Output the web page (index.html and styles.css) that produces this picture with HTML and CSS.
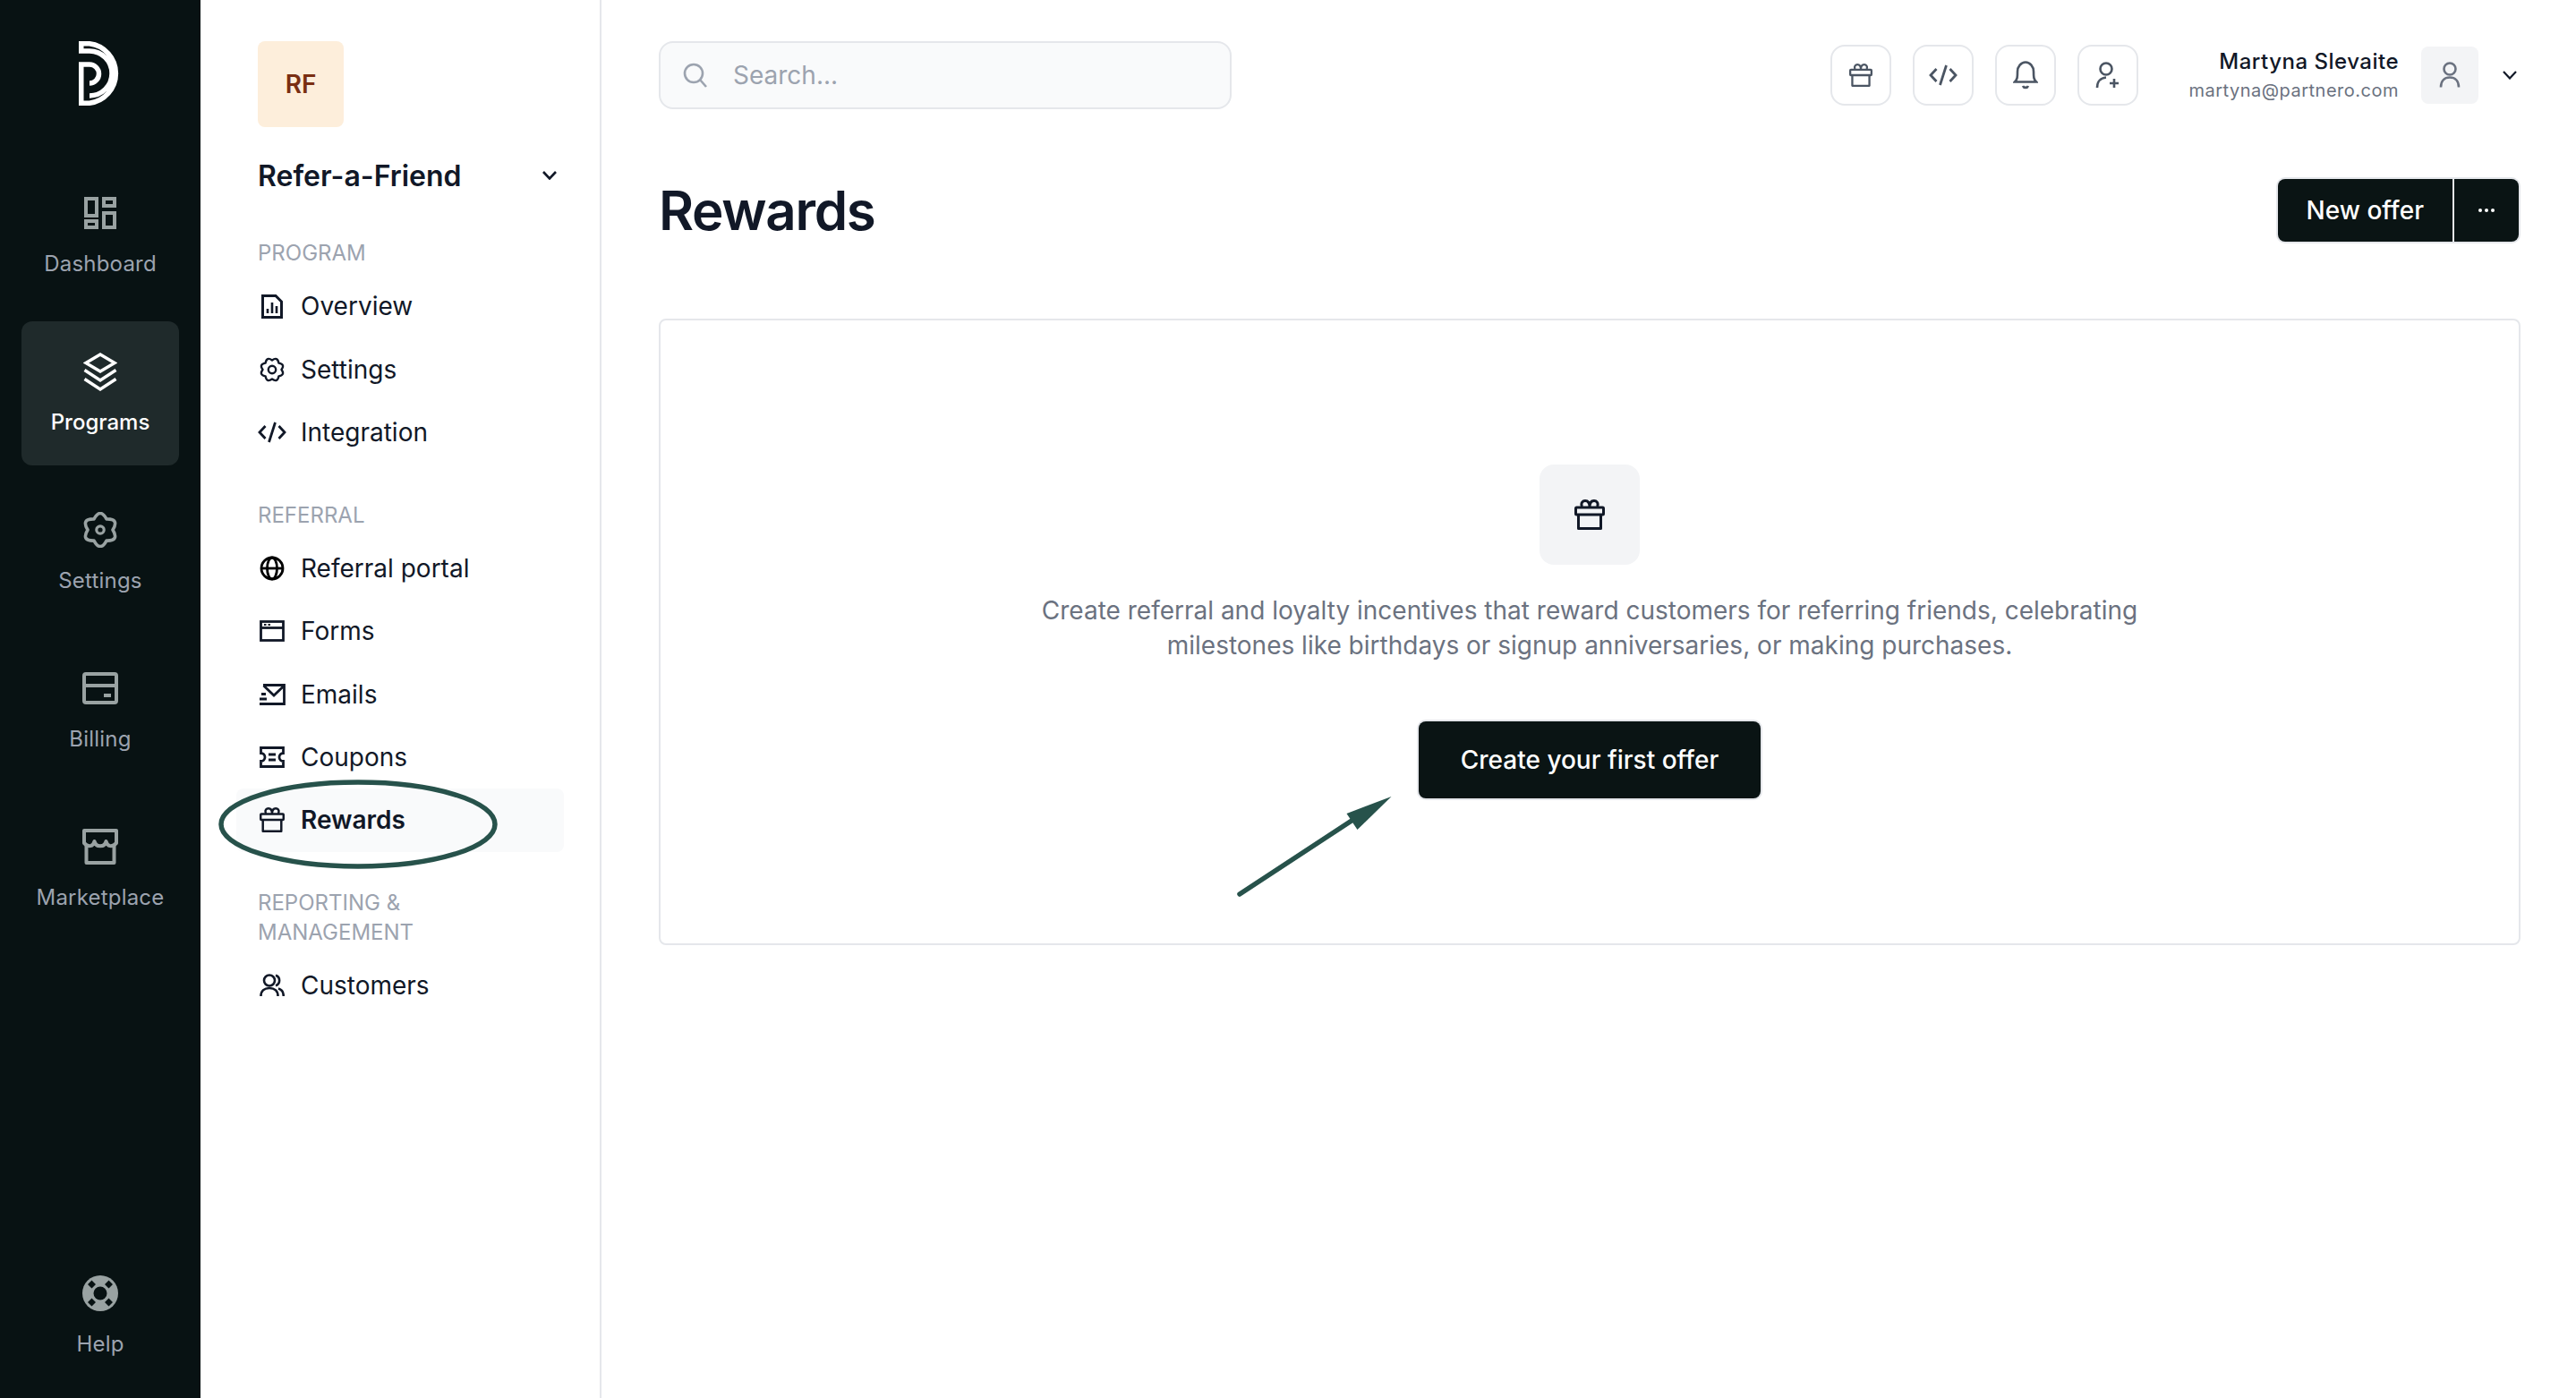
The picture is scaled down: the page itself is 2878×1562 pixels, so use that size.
FILE: index.html
```html
<!DOCTYPE html>
<html lang="en">
<head>
    <meta charset="UTF-8">
    <title>Rewards</title>
    <link rel="stylesheet" href="styles.css">
</head>
<body>
    <svg class="sprite" xmlns="http://www.w3.org/2000/svg">
        <symbol id="gift" viewBox="0 0 34 34">
            <g fill="none" stroke="currentColor" stroke-width="3" stroke-linejoin="round">
                <path d="M17 8.5C17 4 15 1.5 12 1.5S7.5 4 8 6.5C8.200 7.500 8.800 8.500 9.500 8.500M17 8.500C17 4 19 1.500 22 1.500S26.500 4 26 6.500C25.800 7.500 25.200 8.500 24.500 8.500"/>
                <rect x="1.500" y="9" width="31" height="8" rx="1"/>
                <path d="M4.500 17V32.500H29.500V17"/>
            </g>
        </symbol>
        <symbol id="code" viewBox="0 0 32 24">
            <g fill="none" stroke="currentColor" stroke-width="2.800">
                <path d="M8.500 5 2 12 8.500 19M23.500 5 30 12 23.500 19M19.500 1 12.500 23"/>
            </g>
        </symbol>
    </svg>

    <div class="app">
        <nav class="rail">
            <svg class="logo" viewBox="0 0 48 72" fill="none" stroke="#fff" stroke-width="5.500">
                <path d="M12 47A10.500 10.500 0 0 0 12 26H2.750V69.250H12A33.500 33.500 0 0 0 12 2.750H2.750V11H12A25 25 0 0 1 12 61"/>
            </svg>

            <a class="rail-item">
                <span class="rail-icon">
                    <svg width="36" height="36" viewBox="0 0 36 36" fill="none" stroke="currentColor" stroke-width="4">
                        <rect x="2" y="2" width="12" height="19"/>
                        <rect x="22" y="2" width="12" height="8"/>
                        <rect x="2" y="27" width="12" height="7"/>
                        <rect x="22" y="18" width="12" height="16"/>
                    </svg>
                </span>
                Dashboard
            </a>
            <a class="rail-item active">
                <span class="rail-icon">
                    <svg width="38" height="43" viewBox="0 0 38 43" fill="none" stroke="currentColor" stroke-width="3.400">
                        <path d="M19 2 35 11.500 19 21 3 11.500Z"/>
                        <path d="M1.500 19.500 19 31 36.500 19.500M1.500 29.500 19 41 36.500 29.500"/>
                    </svg>
                </span>
                Programs
            </a>
            <a class="rail-item">
                <span class="rail-icon">
                    <svg width="40" height="40" viewBox="0 0 40 40" fill="none" stroke="currentColor" stroke-width="3.600" stroke-linejoin="round">
                        <path d="M13 7.900Q20-5 27 7.900 41.600 7.500 34 20 41.600 32.500 27 32.100 20 45 13 32.100-1.600 32.500 6 20-1.600 7.500 13 7.900Z"/>
                        <circle cx="20" cy="20" r="4.200" stroke-width="3.200"/>
                    </svg>
                </span>
                Settings
            </a>
            <a class="rail-item">
                <span class="rail-icon">
                    <svg width="40" height="36" viewBox="0 0 40 36" fill="none" stroke="currentColor" stroke-width="4">
                        <rect x="2" y="2" width="36" height="32" rx="2"/>
                        <path d="M2 15H38"/>
                        <path d="M24 26H32"/>
                    </svg>
                </span>
                Billing
            </a>
            <a class="rail-item">
                <span class="rail-icon">
                    <svg width="40" height="40" viewBox="0 0 40 40" fill="none" stroke="currentColor" stroke-width="4" stroke-linejoin="round">
                        <path d="M2 2H38V16C33 21 28 20 26.500 14C25 21 15 21 13.500 14C12 20 7 21 2 16Z"/>
                        <path d="M4.500 18V38H35.500V18"/>
                    </svg>
                </span>
                Marketplace
            </a>
            <a class="rail-item rail-help">
                <span class="rail-icon">
                    <svg width="40" height="40" viewBox="0 0 40 40">
                        <circle cx="20" cy="20" r="20" fill="currentColor"/>
                        <circle cx="20" cy="20" r="7.500" fill="#081213"/>
                        <path fill="#081213" d="M10.500 5.500 15 10 10.500 14.500 6 10ZM29.500 5.500 34 10 29.500 14.500 25 10ZM10.500 25.500 15 30 10.500 34.500 6 30ZM29.500 25.500 34 30 29.500 34.500 25 30Z"/>
                    </svg>
                </span>
                Help
            </a>
        </nav>

        <aside class="sidebar">
            <div class="program-badge">RF</div>
            <div class="program-name">
                Refer-a-Friend
                <svg width="16" height="10" viewBox="0 0 16 10" fill="none" stroke="#111827" stroke-width="2.600">
                    <path d="M1 1 8 8.500 15 1"/>
                </svg>
            </div>

            <div class="side-label first">PROGRAM</div>
            <a class="side-item">
                <span class="side-icon">
                    <svg width="24" height="27" viewBox="0 0 24 27" fill="none" stroke="currentColor" stroke-width="3">
                        <path d="M1.500 1.500H16L22.500 8V25.500H1.500Z"/>
                        <path d="M7 21V16M12 21V9M17 21V13" stroke-width="2.600"/>
                    </svg>
                </span>
                Overview
            </a>
            <a class="side-item">
                <span class="side-icon">
                    <svg width="28" height="28" viewBox="0 0 28 28" fill="none" stroke="currentColor" stroke-width="2.400" stroke-linejoin="round">
                        <path d="M24.500 14Q28.800 20.100 21.400 21.400 20.100 28.800 14 24.500 7.900 28.800 6.600 21.400-.8 20.100 3.500 14-.8 7.900 6.600 6.600 7.900-.8 14 3.500 20.100-.8 21.400 6.600 28.800 7.900 24.500 14Z"/>
                        <circle cx="14" cy="14" r="4.200"/>
                    </svg>
                </span>
                Settings
            </a>
            <a class="side-item">
                <span class="side-icon"><svg class="icon-code" width="32" height="24"><use href="#code"/></svg></span>
                Integration
            </a>

            <div class="side-label">REFERRAL</div>
            <a class="side-item">
                <span class="side-icon">
                    <svg width="28" height="28" viewBox="0 0 28 28" fill="none" stroke="#000" stroke-width="2.800">
                        <circle cx="14" cy="14" r="12"/>
                        <ellipse cx="14" cy="14" rx="5.500" ry="12"/>
                        <path d="M2 14H26"/>
                    </svg>
                </span>
                Referral portal
            </a>
            <a class="side-item">
                <span class="side-icon">
                    <svg width="28" height="24" viewBox="0 0 28 24" fill="none" stroke="currentColor" stroke-width="2.800">
                        <rect x="1.500" y="1.500" width="25" height="21"/>
                        <path d="M1.500 8.500H26.500"/>
                        <path d="M5 5H7.500M9.500 5H12" stroke-width="2"/>
                    </svg>
                </span>
                Forms
            </a>
            <a class="side-item">
                <span class="side-icon">
                    <svg width="30" height="24" viewBox="0 0 30 24" fill="none" stroke="currentColor" stroke-width="2.800">
                        <path d="M5 1.500H28.500V22.500H1M1 17H9M3 11.500H8"/>
                        <path d="M5.500 2 17 13 28.500 2"/>
                    </svg>
                </span>
                Emails
            </a>
            <a class="side-item">
                <span class="side-icon">
                    <svg width="28" height="24" viewBox="0 0 28 24" fill="none" stroke="currentColor" stroke-width="2.800">
                        <path d="M1.500 1.500H26.500V7.500A4.500 4.500 0 0 0 26.500 16.500V22.500H1.500V16.500A4.500 4.500 0 0 0 1.500 7.500Z"/>
                        <path d="M10 9H18M10 15H18"/>
                    </svg>
                </span>
                Coupons
            </a>
            <a class="side-item active">
                <span class="side-icon"><svg width="28" height="28"><use href="#gift"/></svg></span>
                Rewards
                <svg class="circle-mark" width="312" height="100" viewBox="0 0 312 100">
                    <ellipse cx="156" cy="50" rx="153" ry="47" fill="none" stroke="#27524b" stroke-width="5.500"/>
                </svg>
            </a>

            <div class="side-label">REPORTING &amp; MANAGEMENT</div>
            <a class="side-item">
                <span class="side-icon">
                    <svg width="28" height="26" viewBox="0 0 28 26" fill="none" stroke="currentColor" stroke-width="2.600">
                        <circle cx="11" cy="7.500" r="6"/>
                        <path d="M1.500 25C1.500 19 5.500 16 11 16S20.500 19 20.500 25"/>
                        <path d="M18 1.800A6 6 0 0 1 18 13.200M21 16.500C24.500 17.500 26.800 20.500 26.800 25"/>
                    </svg>
                </span>
                Customers
            </a>
        </aside>

        <main class="main">
            <header class="topbar">
                <div class="search">
                    <svg width="28" height="28" viewBox="0 0 28 28" fill="none" stroke="#9ca3af" stroke-width="2.600">
                        <circle cx="12" cy="12" r="10"/>
                        <path d="M19 19 26 27"/>
                    </svg>
                    <span>Search...</span>
                </div>
                <div class="top-actions">
                    <button class="icon-btn"><svg width="26" height="26"><use href="#gift"/></svg></button>
                    <button class="icon-btn"><svg width="32" height="24"><use href="#code"/></svg></button>
                    <button class="icon-btn">
                        <svg width="28" height="32" viewBox="0 0 28 32" fill="none" stroke="currentColor" stroke-width="2.600">
                            <path d="M2 23.500H26C23 20.500 23 18 23 12A9 10.500 0 0 0 5 12C5 18 5 20.500 2 23.500Z"/>
                            <path d="M11 28C12 30.500 16 30.500 17 28"/>
                        </svg>
                    </button>
                    <button class="icon-btn">
                        <svg width="28" height="30" viewBox="0 0 28 30" fill="none" stroke="currentColor" stroke-width="2.600">
                            <circle cx="12" cy="8" r="6.500"/>
                            <path d="M2 29C2 22 6 18 12 17.500M21 19V29M16 24H26"/>
                        </svg>
                    </button>
                </div>
                <div class="user">
                    <div class="user-text">
                        <div class="user-name">Martyna Slevaite</div>
                        <div class="user-mail">martyna@partnero.com</div>
                    </div>
                    <div class="avatar">
                        <svg width="24" height="30" viewBox="0 0 24 30" fill="none" stroke="#6b7280" stroke-width="2.600">
                            <circle cx="12" cy="8" r="6.500"/>
                            <path d="M2 28.500C2 21.500 6 17.500 12 17.500S22 21.500 22 28.500"/>
                        </svg>
                    </div>
                    <svg width="16" height="10" viewBox="0 0 16 10" fill="none" stroke="#111827" stroke-width="2.200">
                        <path d="M1 1 8 8.500 15 1"/>
                    </svg>
                </div>
            </header>

            <div class="page-head">
                <h1>Rewards</h1>
                <div class="btn-group">
                    <button class="btn">New offer</button>
                    <button class="btn btn-more">
                        <svg width="18" height="4" viewBox="0 0 18 4" fill="#fff">
                            <circle cx="2" cy="2" r="2"/><circle cx="9" cy="2" r="2"/><circle cx="16" cy="2" r="2"/>
                        </svg>
                    </button>
                </div>
            </div>

            <section class="card">
                <div class="card-icon"><svg width="34" height="34"><use href="#gift"/></svg></div>
                <p>Create referral and loyalty incentives that reward customers for referring friends, celebrating milestones like birthdays or signup anniversaries, or making purchases.</p>
                <button class="btn btn-create">Create your first offer</button>
                <svg class="arrow-mark" width="180" height="120" viewBox="0 0 180 120">
                    <path d="M5 114 130 32" stroke="#27524b" stroke-width="5.500" stroke-linecap="round"/>
                    <path d="M174.500 5 124.500 24 136.500 42Z" fill="#27524b"/>
                </svg>
            </section>
        </main>
    </div>
</body>
</html>
```

FILE: styles.css
```css
* {
    margin: 0;
    padding: 0;
    box-sizing: border-box;
}

body {
    font-family: Inter, "Liberation Sans", sans-serif;
    background: white;
    color: #111827;
}

.sprite {
    display: none;
}

.app {
    display: flex;
    height: 1562px;
}

/* left rail */
.rail {
    width: 224px;
    flex-shrink: 0;
    background: #081213;
    padding: 46px 24px 12px;
    display: flex;
    flex-direction: column;
    gap: 16px;
}

.logo {
    width: 48px;
    height: 72px;
    margin: 0 0 48px 64px;
    flex-shrink: 0;
    overflow: visible;
}

.rail-item {
    height: 161px;
    flex-shrink: 0;
    padding-top: 34px;
    border-radius: 12px;
    display: flex;
    flex-direction: column;
    align-items: center;
    font-size: 24px;
    line-height: 32px;
    letter-spacing: 0.2px;
    color: #9ca3af;
}

.rail-item.active {
    background: #1f2a2b;
    color: white;
    font-weight: 500;
    letter-spacing: 0;
}

.rail-help {
    margin-top: auto;
}

.rail-icon {
    height: 44px;
    margin-bottom: 19px;
    display: flex;
    align-items: center;
    color: #99a2a2;
}

.active .rail-icon {
    color: white;
}

/* program sidebar */
.sidebar {
    width: 448px;
    flex-shrink: 0;
    padding: 46px 40px 0;
    border-right: 2px solid #e5e7eb;
}

.program-badge {
    width: 96px;
    height: 96px;
    margin-left: 24px;
    border-radius: 8px;
    background: #fdeedb;
    color: #7a2e12;
    font-size: 28px;
    font-weight: 600;
    display: flex;
    align-items: center;
    justify-content: center;
}

.program-name {
    margin-top: 30px;
    padding: 0 8px 0 24px;
    height: 48px;
    display: flex;
    align-items: center;
    justify-content: space-between;
    font-size: 32px;
    font-weight: 600;
}

.side-label {
    margin: 40.500px 0 8px;
    padding: 0 60px 0 24px;
    font-size: 24px;
    line-height: 33px;
    color: #9ca3af;
}

.side-label.first {
    margin-top: 46px;
}

.side-item {
    position: relative;
    height: 70.400px;
    padding-left: 24px;
    border-radius: 8px;
    display: flex;
    align-items: center;
    font-size: 28px;
}

.side-item.active {
    background: #f9fafb;
    font-weight: 600;
}

.side-icon {
    width: 32px;
    margin-right: 16px;
    display: flex;
    justify-content: center;
}

.circle-mark {
    position: absolute;
    left: -20px;
    top: -10px;
}

/* main */
.main {
    flex: 1;
    min-width: 0;
    padding: 46px 62px 0 64px;
}

.topbar {
    display: flex;
    align-items: center;
}

.search {
    width: 640px;
    height: 76px;
    padding-left: 25px;
    border: 2px solid #e5e7eb;
    border-radius: 16px;
    background: #f9fafb;
    display: flex;
    align-items: center;
    gap: 28px;
    font-size: 28px;
    color: #9ca3af;
}

.top-actions {
    margin-left: auto;
    display: flex;
    gap: 24px;
}

.icon-btn {
    width: 68px;
    height: 68px;
    border: 2px solid #e5e7eb;
    border-radius: 16px;
    background: white;
    color: #4b5563;
    display: flex;
    align-items: center;
    justify-content: center;
}

.user {
    margin-left: 56px;
    padding-right: 4px;
    display: flex;
    align-items: center;
}

.user-text {
    padding-top: 2px;
    text-align: right;
}

.user-name {
    font-size: 24px;
    font-weight: 500;
    line-height: 32px;
    letter-spacing: 0.5px;
}

.user-mail {
    font-size: 20px;
    line-height: 32px;
    color: #6b7280;
    letter-spacing: 0.5px;
}

.avatar {
    width: 64px;
    height: 64px;
    margin: 0 27px 0 25px;
    border-radius: 8px;
    background: #f3f4f6;
    display: flex;
    align-items: center;
    justify-content: center;
}

.page-head {
    margin-top: 76px;
    display: flex;
    align-items: center;
    justify-content: space-between;
}

h1 {
    font-size: 60px;
    font-weight: 600;
    line-height: 74px;
    letter-spacing: -1.3px;
}

.btn-group {
    padding: 2px;
    display: flex;
}

.btn {
    height: 70px;
    padding: 0 32px;
    border: none;
    background: #0a1414;
    color: white;
    font-family: inherit;
    font-size: 28px;
    font-weight: 500;
    box-shadow: 0 0 0 2px #e5e7eb;
    border-radius: 8px 0 0 8px;
    display: flex;
    align-items: center;
    justify-content: center;
}

.btn-more {
    width: 72px;
    padding: 0;
    margin-left: 2px;
    border-radius: 0 8px 8px 0;
}

.card {
    position: relative;
    height: 700px;
    margin-top: 84px;
    padding-top: 161px;
    border: 2px solid #e5e7eb;
    border-radius: 8px;
    display: flex;
    flex-direction: column;
    align-items: center;
}

.card-icon {
    width: 112px;
    height: 112px;
    border-radius: 16px;
    background: #f3f4f6;
    display: flex;
    align-items: center;
    justify-content: center;
}

.card p {
    max-width: 1300px;
    margin-top: 32px;
    text-align: center;
    font-size: 28px;
    line-height: 39px;
    color: #6b7280;
}

.btn-create {
    width: 382px;
    height: 86px;
    margin-top: 65px;
    border-radius: 8px;
}

.arrow-mark {
    position: absolute;
    left: 642px;
    top: 527px;
}
```
